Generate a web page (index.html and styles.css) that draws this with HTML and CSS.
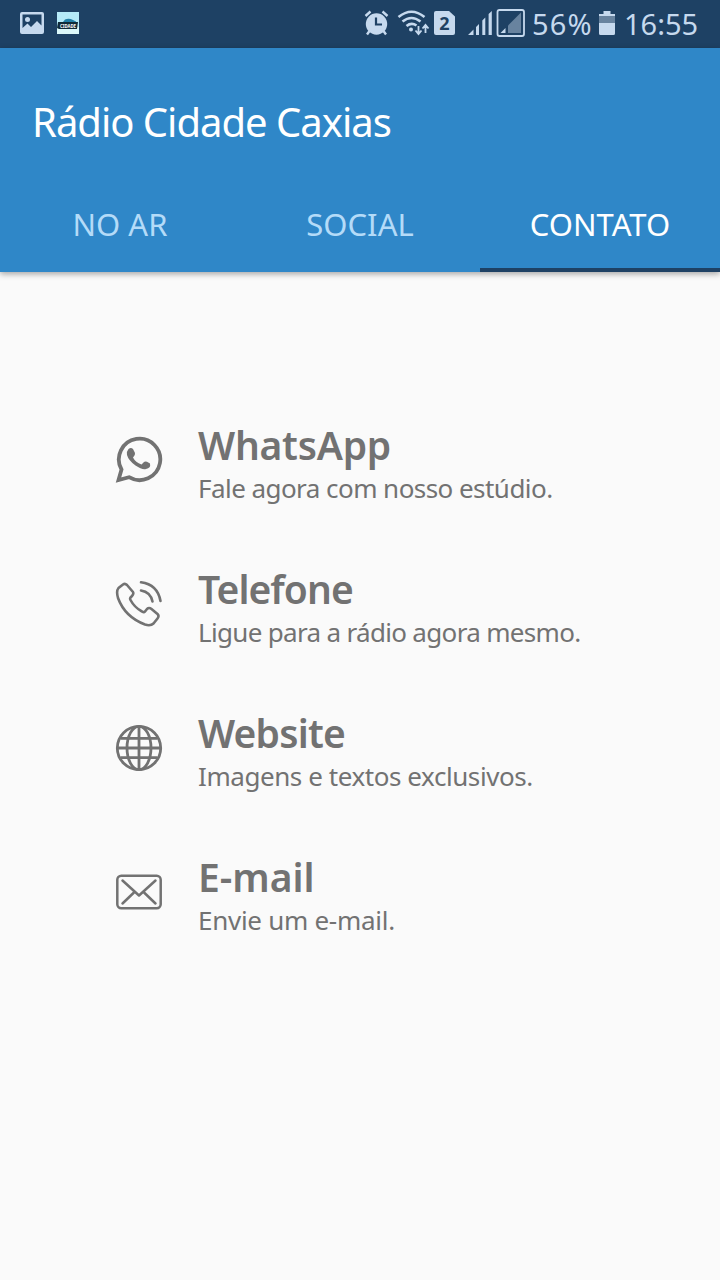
FILE: index.html
```html
<!DOCTYPE html>
<html lang="pt-BR">
<head>
    <meta charset="UTF-8">
    <meta name="viewport" content="width=device-width, initial-scale=1.0">
    <title>Rádio Cidade Caxias</title>
    <link rel="stylesheet" href="styles.css">
</head>
<body>

<div class="status-bar">
    <div class="status-left">
        <svg width="24" height="22" viewBox="0 0 24 22">
            <path fill="#c6d9ee" fill-rule="evenodd" d="M2 0H22Q24 0 24 2V20Q24 22 22 22H2Q0 22 0 20V2Q0 0 2 0ZM2.500 2.500V16L7.500 11.500L11 15L17 9L21.500 13.500V2.500Z"/>
            <circle cx="7.500" cy="7.500" r="2.500" fill="#c6d9ee"/>
        </svg>
        <svg class="app-badge" width="22" height="22" viewBox="0 0 22 22">
            <rect width="22" height="22" fill="#b5eaf8"/>
            <path fill="#dcf8fa" d="M0 15H22V22H0Z"/>
            <path fill="#2380a8" d="M6 10L8 7.500Q12 6 16 8L19 9.500V11H6Z"/>
            <path fill="#102b38" d="M1 10H21L20 17H2L0 16Z"/>
            <text x="3" y="15.500" class="badge-text" textLength="16" lengthAdjust="spacingAndGlyphs">CIDADE</text>
        </svg>
    </div>
    <div class="status-right">
        <svg class="ic-signals" width="162" height="30" viewBox="363 8 162 30" fill="none" stroke="#c6d9ee">
            <!-- alarm -->
            <circle cx="376.500" cy="24" r="10.700" fill="#c6d9ee" stroke="none"/>
            <path stroke-width="2.400" d="M365.500 16L370.500 11.500M387.500 16L382.500 11.500M369.500 31L367 34.500M383.500 31L386 34.500"/>
            <path stroke="#1e4164" stroke-width="2.200" d="M376 17.500V24.500H382"/>
            <!-- wifi -->
            <path stroke-width="2.600" d="M398.500 17Q411.500 6.500 424.500 17M402.500 21.500Q411.500 14.500 420.500 21.500M406.500 26Q411.500 22 416.500 25.500"/>
            <circle cx="411" cy="29.500" r="2" fill="#c6d9ee" stroke="none"/>
            <path stroke-width="1.800" d="M418.500 26V33.500M415.500 30.500L418.500 34L421.500 30.500M425.500 33V25.500M422.500 28.500L425.500 25L428.500 28.500"/>
            <!-- sim 2 -->
            <path fill="#c6d9ee" stroke="none" d="M436 11H449L455 16.500V33Q455 35 453 35H436Q434 35 434 33V13Q434 11 436 11Z"/>
            <text x="444.300" y="30" class="sim-text">2</text>
            <!-- signal -->
            <path fill="#c6d9ee" stroke="none" d="M468 35L473.500 29.500V35ZM476 27L479 24V35H476ZM482.300 20.500L485.300 17.500V35H482.300ZM488.600 14L491.800 11V35H488.600Z"/>
            <rect x="497.500" y="10" width="26.500" height="26" rx="2" stroke-width="1.800"/>
            <path fill="#68839f" stroke="none" d="M508 25.500L521 12.500V33H508Z"/>
            <path fill="#c6d9ee" stroke="none" d="M500.500 33L505.500 28V33Z"/>
        </svg>
        <span class="percent">56%</span>
        <svg class="ic-battery" width="16" height="24" viewBox="0 0 16 24">
            <path fill="#68839f" d="M0 5H16V12H0Z"/>
            <path fill="#c6d9ee" d="M4.500 0H11.500V3H16V5H0V3H4.500ZM0 12H16V22.500Q16 24 14.500 24H1.500Q0 24 0 22.500Z"/>
        </svg>
        <span class="clock">16:55</span>
    </div>
</div>

<header class="app-bar">
    <h1 class="title">Rádio Cidade Caxias</h1>
    <nav class="tabs">
        <div class="tab">NO AR</div>
        <div class="tab">SOCIAL</div>
        <div class="tab active">CONTATO</div>
    </nav>
</header>

<main class="contacts">
    <div class="contact whatsapp">
        <svg class="icon" width="48" height="48" viewBox="0 0 48 48">
            <path fill="none" stroke="#727272" stroke-width="3.800" d="M3.500 44L6.500 33.500A20.700 20.700 0 1 1 14 41.200Z"/>
            <path fill="#727272" d="M13.500 13Q16 11 18 13L20 17Q20.500 19 18 21.500Q20.500 26.500 26.500 28.500L29 26Q30 25 32 25.800L35 27.500Q36 32 31 33Q27 34 20.500 29.500Q13.500 24.500 12 19Q11.300 15.500 13.500 13Z"/>
        </svg>
        <div>
            <h2>WhatsApp</h2>
            <p>Fale agora com nosso estúdio.</p>
        </div>
    </div>
    <div class="contact telefone">
        <svg class="icon" width="48" height="48" viewBox="0 0 48 48" fill="none" stroke="#727272" stroke-width="2.600" stroke-linecap="round" stroke-linejoin="round">
            <path d="M3.500 8L8 4.500Q10 3 12 5L18 12Q19 14 17 16L15.500 17.500Q14.700 18.500 15.500 20Q19.500 27.500 27 31.500Q29 32.800 30 31.500L32 29Q34 27 36.500 29L42.500 34Q44.500 36 42.500 38.500L38.500 43.500Q35.500 46.300 30 44.500Q10 37 3 18Q1 11 3.500 8Z"/>
            <path d="M26 2.300Q42.500 4.500 45.500 21M26 10.500Q35.500 12 37.500 21.500"/>
        </svg>
        <div>
            <h2>Telefone</h2>
            <p>Ligue para a rádio agora mesmo.</p>
        </div>
    </div>
    <div class="contact website">
        <svg class="icon" width="48" height="48" viewBox="0 0 48 48" fill="none" stroke="#727272" stroke-width="2.800">
            <circle cx="24" cy="24" r="21.700"/>
            <ellipse cx="24" cy="24" rx="12" ry="21.700"/>
            <path d="M24 2.500V45.500M2.500 24H45.500M5.500 14.300H42.500M5.500 33.700H42.500"/>
        </svg>
        <div>
            <h2>Website</h2>
            <p>Imagens e textos exclusivos.</p>
        </div>
    </div>
    <div class="contact email">
        <svg class="icon" width="48" height="48" viewBox="0 0 48 48" fill="none" stroke="#727272" stroke-width="2.500" stroke-linecap="round" stroke-linejoin="round">
            <rect x="2.300" y="7.800" width="43.400" height="32.400" rx="4"/>
            <path d="M7.500 12.500L24 27.500L40.500 12.500M7.500 35.500L19.500 24M40.500 35.500L28.500 24"/>
        </svg>
        <div>
            <h2>E-mail</h2>
            <p>Envie um e-mail.</p>
        </div>
    </div>
</main>

</body>
</html>
```

FILE: styles.css
```css
body {
    font-family: "Noto Sans", sans-serif;
    background-color: #fafafa;
    margin: 0;
    height: 1280px;
    overflow: hidden;
}

svg {
    display: block;
    flex: none;
}

h1, h2, p {
    margin: 0;
    white-space: nowrap;
}

.status-bar {
    display: flex;
    justify-content: space-between;
    height: 48px;
    background-color: #1e4164;
    color: #c6d9ee;
    font-size: 29px;
    line-height: 48px;
}

.status-left {
    display: flex;
    gap: 13px;
    padding: 12px 0 0 20px;
}

.badge-text {
    font-size: 5.5px;
    font-weight: bold;
    fill: #fff;
}

.sim-text {
    font-size: 18px;
    font-weight: bold;
    fill: #1e4164;
    stroke: none;
    text-anchor: middle;
}

.status-right {
    display: flex;
    width: 357px;
}

.ic-signals {
    margin-top: 8px;
}

.percent {
    width: 67px;
    margin-left: 7px;
    letter-spacing: 1.2px;
}

.ic-battery {
    margin-top: 11px;
}

.clock {
    margin-left: 9px;
}

.app-bar {
    position: relative;
    height: 224px;
    background-color: #2f87c8;
    box-shadow: 0 2px 6px rgba(0, 0, 0, 0.35);
}

.title {
    height: 128px;
    padding: 46px 0 0 32px;
    box-sizing: border-box;
    color: #fff;
    font-size: 40px;
    font-weight: normal;
    line-height: 56px;
    letter-spacing: -1px;
}

.tabs {
    display: grid;
    grid-template-columns: repeat(3, 1fr);
    height: 96px;
}

.tab {
    box-sizing: border-box;
    padding-top: 28px;
    text-align: center;
    color: #b4dbf8;
    font-size: 31px;
    line-height: 40px;
}

.tab.active {
    color: #fff;
    border-bottom: 4px solid #1e4164;
}

.contacts {
    padding: 144px 0 0 115px;
}

.contact {
    display: flex;
    gap: 35px;
    height: 144px;
    color: #727272;
}

.icon {
    margin-top: 20px;
}

.contact h2 {
    height: 50px;
    font-size: 39px;
    font-weight: 600;
    line-height: 58px;
}

.contact p {
    font-size: 26px;
    line-height: 44px;
}

.whatsapp h2 {
    letter-spacing: -0.25px;
}

.whatsapp p {
    letter-spacing: -0.55px;
}

.telefone h2 {
    letter-spacing: -0.95px;
}

.telefone p {
    letter-spacing: -0.68px;
}

.website h2 {
    letter-spacing: -0.8px;
}

.website p {
    letter-spacing: -0.43px;
}

.email p {
    letter-spacing: -0.28px;
}
```
